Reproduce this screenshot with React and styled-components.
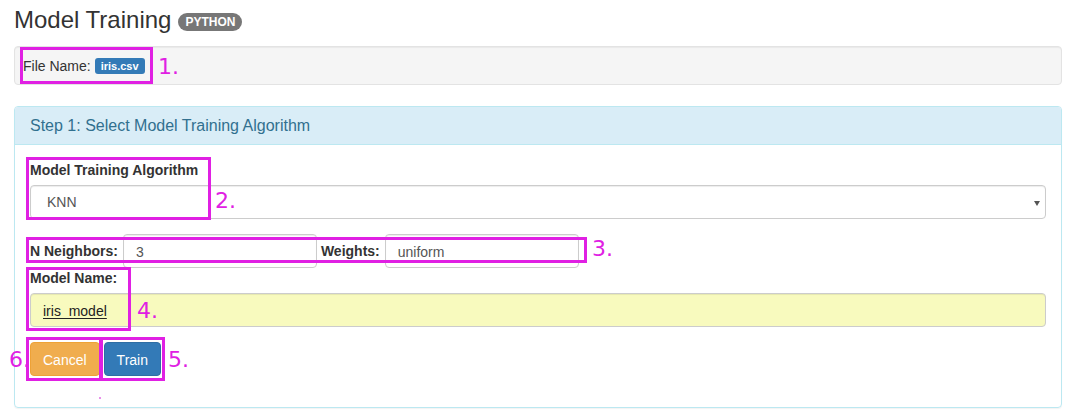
import React from "react";
import styled, { createGlobalStyle } from "styled-components";

const GlobalStyle = createGlobalStyle`
  html, body {
    margin: 0;
    padding: 0;
    background: #fff;
  }
  body {
    font-family: "Liberation Sans", Arial, sans-serif;
    font-size: 14px;
    line-height: 20px;
    color: #333;
  }
`;

const annotations = [
  { left: 20, top: 47, width: 133, height: 37, label: "1.", lx: 158, ly: 54 },
  { left: 26, top: 157, width: 185, height: 63, label: "2.", lx: 215, ly: 188 },
  { left: 26, top: 237, width: 561, height: 26, label: "3.", lx: 592, ly: 236 },
  { left: 26, top: 267, width: 105, height: 64, label: "4.", lx: 137, ly: 298 },
  { left: 100, top: 337, width: 65, height: 44, label: "5.", lx: 168, ly: 347 },
  { left: 26, top: 337, width: 76, height: 44, label: "6.", lx: 9, ly: 347 }
];

export const App = () => {
  return (
    <Page>
      <GlobalStyle />
      <Title>
        Model Training <Label>PYTHON</Label>
      </Title>
      <Well>
        File Name: <Badge>iris.csv</Badge>
      </Well>
      <Panel>
        <PanelHeading>Step 1: Select Model Training Algorithm</PanelHeading>
        <PanelBody>
          <FormGroup>
            <FieldLabel>Model Training Algorithm</FieldLabel>
            <SelectBox>
              <span>KNN</span>
              <Caret />
            </SelectBox>
          </FormGroup>
          <InlineRow>
            <FieldLabel inline>N Neighbors:</FieldLabel>
            <Input width={194}>3</Input>
            <FieldLabel inline>Weights:</FieldLabel>
            <Input width={194}>uniform</Input>
          </InlineRow>
          <FormGroup>
            <FieldLabel>Model Name:</FieldLabel>
            <Input highlight>
              <Underlined>iris_model</Underlined>
            </Input>
          </FormGroup>
          <ButtonRow>
            <Button variant="warning">Cancel</Button>
            <Button variant="primary">Train</Button>
          </ButtonRow>
        </PanelBody>
      </Panel>

      {annotations.map((a) => (
        <React.Fragment key={a.label}>
          <Marker
            style={{ left: a.left, top: a.top, width: a.width, height: a.height }}
          />
          <MarkerNumber style={{ left: a.lx, top: a.ly }}>{a.label}</MarkerNumber>
        </React.Fragment>
      ))}
      <Dot />
    </Page>
  );
};

const Page = styled.div`
  position: relative;
  padding: 7px 12px 12px 14px;
  width: 1048px;
`;

const Title = styled.h1`
  margin: 0 0 13px;
  font-size: 24px;
  font-weight: 400;
  line-height: 26px;
  color: #333;
  display: flex;
  align-items: center;
  gap: 7px;
`;

const Label = styled.span`
  display: inline-block;
  background: #777;
  color: #fff;
  font-size: 12px;
  font-weight: 700;
  line-height: 12px;
  padding: 3px 7px 3px;
  border-radius: 9px;
  margin-top: 3px;
`;

const Well = styled.div`
  box-sizing: border-box;
  height: 39px;
  background: #f5f5f5;
  border: 1px solid #e3e3e3;
  border-radius: 4px;
  box-shadow: inset 0 1px 1px rgba(0, 0, 0, 0.05);
  padding: 9px 8px;
  display: flex;
  align-items: center;
  gap: 4px;
  margin-bottom: 21px;
`;

const Badge = styled.span`
  display: inline-block;
  background: #337ab7;
  color: #fff;
  font-size: 11px;
  font-weight: 700;
  line-height: 12px;
  padding: 2px 6px;
  border-radius: 3px;
`;

const Panel = styled.div`
  border: 1px solid #bce8f1;
  border-radius: 4px;
  box-shadow: 0 1px 1px rgba(0, 0, 0, 0.05);
`;

const PanelHeading = styled.div`
  background: #d9edf7;
  color: #31708f;
  border-bottom: 1px solid #bce8f1;
  border-radius: 3px 3px 0 0;
  padding: 10px 15px;
  font-size: 16px;
  line-height: 17px;
`;

const PanelBody = styled.div`
  padding: 15px 15px 16px;
`;

const FormGroup = styled.div`
  margin-bottom: 15px;
`;

const FieldLabel = styled.div`
  font-weight: 700;
  margin-bottom: ${(p) => (p.inline ? "0" : "5px")};
  margin-right: ${(p) => (p.inline ? "5px" : "0")};
  white-space: nowrap;
`;

const Input = styled.div`
  box-sizing: border-box;
  height: 34px;
  width: ${(p) => (p.width ? `${p.width}px` : "100%")};
  padding: 7px 12px;
  font-size: 14px;
  line-height: 20px;
  color: ${(p) => (p.highlight ? "#222" : "#555")};
  background: ${(p) => (p.highlight ? "#f8fabe" : "#fff")};
  border: 1px solid #ccc;
  border-radius: 4px;
  box-shadow: inset 0 1px 1px rgba(0, 0, 0, 0.075);
`;

const Underlined = styled.span`
  text-decoration: underline;
  text-underline-offset: 2px;
`;

const SelectBox = styled(Input)`
  display: flex;
  align-items: center;
  justify-content: space-between;
  padding: 0 5px 0 16px;
`;

const Caret = styled.span`
  width: 0;
  height: 0;
  margin-top: 2px;
  border-left: 3px solid transparent;
  border-right: 3px solid transparent;
  border-top: 5px solid #555;
`;

const InlineRow = styled.div`
  display: flex;
  align-items: center;
  & > div:nth-child(3) {
    margin-left: 4px;
  }
`;

const ButtonRow = styled.div`
  display: flex;
  gap: 4px;
  margin: 15px 0 15px;
`;

const Button = styled.div`
  box-sizing: border-box;
  height: 34px;
  padding: 7px 12px;
  font-size: 14px;
  line-height: 20px;
  color: #fff;
  border-radius: 4px;
  background: ${(p) => (p.variant === "warning" ? "#f0ad4e" : "#337ab7")};
  border: 1px solid ${(p) => (p.variant === "warning" ? "#eea236" : "#2e6da4")};
`;

const Marker = styled.div`
  position: absolute;
  box-sizing: border-box;
  border: 3px solid #e020e3;
`;

const MarkerNumber = styled.div`
  position: absolute;
  font-family: "DejaVu Sans", sans-serif;
  font-size: 22px;
  line-height: 26px;
  color: #e020e3;
`;

const Dot = styled.div`
  position: absolute;
  left: 99px;
  top: 397px;
  width: 2px;
  height: 2px;
  background: #e890ea;
`;

export default App;
